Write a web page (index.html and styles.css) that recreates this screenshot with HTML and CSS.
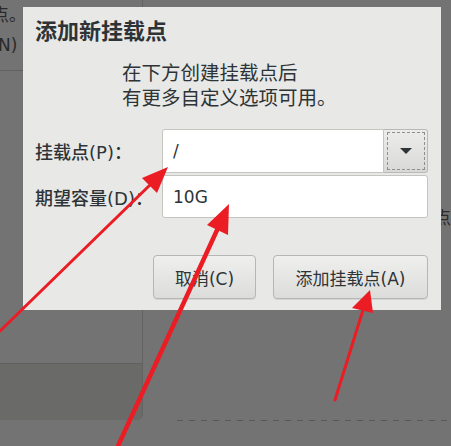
FILE: index.html
```html
<!DOCTYPE html>
<html lang="zh-CN">
<head>
    <meta charset="UTF-8">
    <meta name="viewport" content="width=device-width, initial-scale=1.0">
    <title>添加新挂载点</title>
    <link rel="stylesheet" href="styles.css">
</head>
<body>

    <!-- Fundo: tela do instalador escurecida -->
    <div class="desktop">
        <div class="side">
            <div class="side-top">
                <p class="clip clip-a">点。</p>
                <p class="clip clip-b">N)</p>
            </div>
            <div class="side-mid"></div>
            <div class="side-low"></div>
        </div>
        <div class="main">
            <p class="peek">载点</p>
            <div class="dash"></div>
        </div>
    </div>

    <!-- Diálogo -->
    <div class="dialog">
        <h2 class="title">添加新挂载点</h2>
        <p class="info">在下方创建挂载点后<br>有更多自定义选项可用。</p>

        <div class="form">
            <label class="label" for="mount">挂载点(P)：</label>
            <div class="combo">
                <input class="entry combo-entry" id="mount" type="text" value="/">
                <button class="combo-btn" type="button"><span class="caret"></span></button>
            </div>

            <label class="label" for="size">期望容量(D)：</label>
            <input class="entry" id="size" type="text" value="10G">
        </div>

        <div class="actions">
            <button class="btn btn-cancel" type="button">取消(C)</button>
            <button class="btn btn-add" type="button">添加挂载点(A)</button>
        </div>
    </div>

    <!-- Setas vermelhas de anotação -->
    <svg class="arrows" width="451" height="446" viewBox="0 0 451 446">
        <g fill="#ec1c24" stroke="#ec1c24" stroke-linecap="round">
            <line x1="0" y1="331" x2="151" y2="184" stroke-width="3"/>
            <polygon points="168,167 157,193 142,178" stroke="none"/>

            <line x1="118" y1="446" x2="218" y2="228" stroke-width="4.5"/>
            <polygon points="229,204 228,235 207,225" stroke="none"/>

            <line x1="335" y1="400" x2="363" y2="310" stroke-width="3"/>
            <polygon points="370,290 373,313 352,308" stroke="none"/>
        </g>
    </svg>

</body>
</html>
```

FILE: styles.css
```css
body {
    margin: 0;
    width: 451px;
    height: 446px;
    overflow: hidden;
    position: relative;
    background-color: #737373;
    font-family: "DejaVu Sans", "Noto Sans CJK SC", sans-serif;
    color: #2e3436;
}

/* fundo */
.desktop {
    display: flex;
    height: 446px;
}

.side {
    width: 165px;
    height: 420px;
    border-right: 1px solid #626262;
    border-bottom-right-radius: 6px;
    overflow: hidden;
    display: flex;
    flex-direction: column;
}

.side-top {
    height: 70px;
    border-bottom: 1px solid #616161;
    overflow: hidden;
}

.clip {
    margin: 0;
    font-size: 17px;
    line-height: 30px;
    color: #2a2a2a;
    white-space: nowrap;
}

.clip-a {
    margin-left: -8px;
}

.clip-b {
    margin-left: -2px;
}

.side-mid {
    height: 292px;
    border-bottom: 1px solid #616161;
}

.side-low {
    flex: 1;
    background-color: #6a6a68;
}

.main {
    flex: 1;
    display: flex;
    flex-direction: column;
}

.peek {
    margin: 207px 0 0 274px;
    font-size: 17px;
    line-height: 22px;
    color: #2a2a2a;
    white-space: nowrap;
}

.dash {
    margin: 191px 0 0 34px;
    height: 1px;
    background: repeating-linear-gradient(90deg, #585858 0 6px, transparent 6px 12px);
}

/* diálogo */
.dialog {
    position: absolute;
    left: 23px;
    top: 7px;
    width: 418px;
    height: 303px;
    box-sizing: border-box;
    padding: 11px 13px 11px 12px;
    background-color: #e8e8e7;
    display: flex;
    flex-direction: column;
}

.title {
    margin: 0;
    font-size: 22px;
    line-height: 28px;
    font-weight: bold;
}

.info {
    margin: 15px 0 0 87px;
    font-size: 19.5px;
    line-height: 25px;
}

.form {
    margin-top: 18px;
    display: grid;
    grid-template-columns: 127px 1fr;
    grid-template-rows: 44px 43px;
    row-gap: 2px;
    align-items: center;
}

.label {
    font-size: 18px;
    font-weight: 500;
    white-space: nowrap;
}

.entry {
    box-sizing: border-box;
    height: 100%;
    width: 100%;
    margin: 0;
    padding: 0 10px;
    font-family: "DejaVu Sans", sans-serif;
    font-size: 17px;
    color: #2e3436;
    background-color: #fff;
    border: 1px solid #c4c4c1;
    border-radius: 3px;
    outline: none;
}

.combo {
    display: flex;
    height: 100%;
}

.combo-entry {
    flex: 1;
    border-radius: 3px 0 0 3px;
}

.combo-btn {
    width: 44px;
    height: 100%;
    margin: 0;
    padding: 0;
    border: 1px solid #b9b9b7;
    border-left: none;
    border-radius: 0 3px 3px 0;
    background: linear-gradient(#ececeb, #d9d9d7);
    outline: 1px dashed #8e8e8e;
    outline-offset: -4px;
    display: flex;
    align-items: center;
    justify-content: center;
}

.caret {
    width: 0;
    height: 0;
    border-left: 6px solid transparent;
    border-right: 6px solid transparent;
    border-top: 6px solid #2e3436;
}

.actions {
    margin-top: auto;
    display: flex;
    justify-content: flex-end;
    gap: 17px;
}

.btn {
    height: 44px;
    margin: 0;
    padding: 0;
    font-family: "DejaVu Sans", "Noto Sans CJK SC", sans-serif;
    font-size: 17px;
    color: #2e3436;
    background: linear-gradient(#efefee, #dcdcda);
    border: 1px solid #b6b6b4;
    border-radius: 4px;
    box-shadow: 0 1px 0 rgba(0, 0, 0, 0.08);
}

.btn-cancel {
    width: 103px;
}

.btn-add {
    width: 155px;
}

/* setas */
.arrows {
    position: absolute;
    left: 0;
    top: 0;
}
```
